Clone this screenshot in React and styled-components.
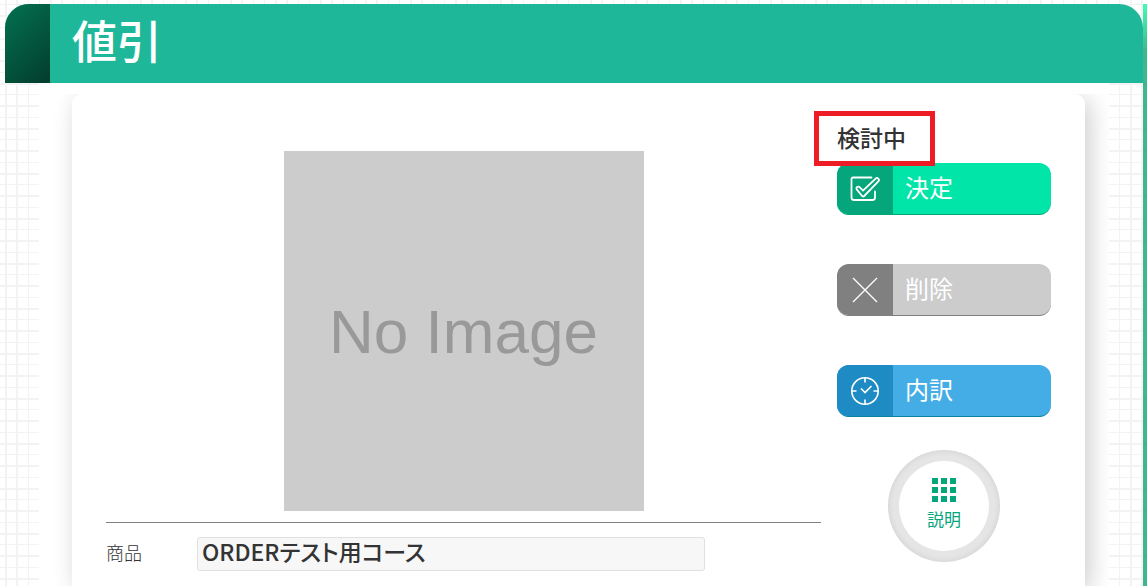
import React from "react";
import styled, { createGlobalStyle } from "styled-components";

const App = () => {
  return (
    <Page>
      <GlobalStyle />
      <Main>
        <Header>
          <HeaderMark />
          <h1>値引</h1>
        </Header>
        <Content>
          <CardArea>
            <Card>
              <Detail>
                <NoImage>No Image</NoImage>
                <Row>
                  <label htmlFor="product">商品</label>
                  <input
                    id="product"
                    type="text"
                    defaultValue="ORDERテスト用コース"
                  />
                </Row>
              </Detail>
              <Side>
                <Status>検討中</Status>
                <Actions>
                  <ActionButton $main="#02e5a9" $dark="#06a67c">
                    <ActionIcon $color="#06a67c">
                      <CheckIcon />
                    </ActionIcon>
                    <span>決定</span>
                  </ActionButton>
                  <ActionButton $main="#cccccc" $dark="#808080">
                    <ActionIcon $color="#808080">
                      <CrossIcon />
                    </ActionIcon>
                    <span>削除</span>
                  </ActionButton>
                  <ActionButton $main="#45ade5" $dark="#07839a">
                    <ActionIcon $color="#1f8bc4">
                      <ClockIcon />
                    </ActionIcon>
                    <span>内訳</span>
                  </ActionButton>
                </Actions>
                <HelpButton>
                  <HelpInner>
                    <GridIcon />
                    <span>説明</span>
                  </HelpInner>
                </HelpButton>
              </Side>
            </Card>
          </CardArea>
        </Content>
      </Main>
      <SideEdge />
    </Page>
  );
};

const CheckIcon = () => (
  <svg width="30" height="26" viewBox="0 0 30 26" fill="none" stroke="#fff">
    <path
      strokeWidth="1.8"
      strokeLinecap="round"
      d="M21.5 1.5H3A1.5 1.5 0 0 0 1.5 3v18.5A2.5 2.5 0 0 0 4 24h18.5a2.5 2.5 0 0 0 2.5-2.5v-6"
    />
    <path
      strokeWidth="1.8"
      strokeLinejoin="round"
      d="M6.9 13.6a1.8 1.8 0 0 1 2.6-2.5l3.5 3.5L25.6 2.7a1.9 1.9 0 0 1 2.7 2.7L14.2 20a1.5 1.5 0 0 1-2.1 0z"
    />
  </svg>
);

const CrossIcon = () => (
  <svg width="26" height="26" viewBox="0 0 26 26" fill="none" stroke="#fff">
    <path strokeWidth="1.3" d="M1 1l24 24M25 1l-24 24" />
  </svg>
);

const ClockIcon = () => (
  <svg width="28" height="28" viewBox="0 0 28 28" fill="none" stroke="#fff">
    <circle cx="14" cy="14" r="13.2" strokeWidth="1.6" />
    <path
      strokeWidth="1.6"
      d="M14 1v4.5M14 22.5v4.5M1 14h4.5M22.5 14h4.5M10 11.5l4 4 6.5-6.5"
    />
  </svg>
);

const GridIcon = () => (
  <svg width="24" height="24" viewBox="0 0 24 24" fill="#06a67c">
    {[0, 9, 18].map((y) =>
      [0, 9, 18].map((x) => (
        <rect key={`${x}-${y}`} x={x} y={y} width="6" height="6" />
      ))
    )}
  </svg>
);

export default App;

const GlobalStyle = createGlobalStyle`
  * {
    box-sizing: border-box;
  }

  body {
    margin: 0;
    overflow: hidden;
    color: #333;
    font-family: "Noto Sans CJK JP", "Noto Sans", sans-serif;
    font-feature-settings: "palt";
  }

  button,
  input {
    font-family: inherit;
    font-feature-settings: inherit;
  }
`;

const line = "#f3f3f3";

const Page = styled.div`
  display: flex;
  min-height: 100vh;
  padding: 4px 0 0 5px;
  background-color: #fff;
  background-image:
    linear-gradient(
      90deg,
      transparent 5px, ${line} 5px, ${line} 7px,
      transparent 7px, transparent 16px, ${line} 16px, ${line} 18px,
      transparent 18px, transparent 28px, ${line} 28px, ${line} 29px,
      transparent 29px, transparent 39px, ${line} 39px, ${line} 40px,
      transparent 40px
    ),
    linear-gradient(
      transparent 4px, ${line} 4px, ${line} 5px,
      transparent 5px, transparent 15px, ${line} 15px, ${line} 17px,
      transparent 17px, transparent 27px, ${line} 27px, ${line} 28px,
      transparent 28px, transparent 38px, ${line} 38px, ${line} 40px,
      transparent 40px
    );
  background-size: 45px 45px;
`;
const Main = styled.div`
  flex: 1;
  display: flex;
  flex-direction: column;
`;
const SideEdge = styled.div`
  width: 4px;
  background: linear-gradient(
    rgba(20, 250, 160, 0.8),
    rgba(0, 160, 105, 0.75) 48px
  );
`;

const Header = styled.header`
  display: flex;
  height: 79px;
  overflow: hidden;
  border-radius: 24px 24px 0 0;
  background-color: #1fb79a;

  > h1 {
    margin: 0;
    padding-left: 22px;
    color: #fff;
    font-size: 45px;
    font-weight: 500;
    line-height: 72px;
  }
`;
const HeaderMark = styled.div`
  width: 45px;
  background: linear-gradient(135deg, #037250, #033c2c);
`;

const Content = styled.main`
  flex: 1;
  display: flex;
  margin: 0 34px;
  padding-top: 11px;
  background-color: #fff;
`;
const CardArea = styled.div`
  flex: 1;
  display: flex;
  padding: 0 24px 0 33px;
  overflow: hidden;
`;
const Card = styled.section`
  flex: 1;
  display: flex;
  gap: 16px;
  padding: 0 34px;
  border-radius: 10px 10px 0 0;
  background-color: #fff;
  box-shadow: 5px 5px 25px rgba(0, 0, 0, 0.2);
`;

const Detail = styled.div`
  flex: 1;
  padding-top: 57px;
`;
const NoImage = styled.div`
  display: flex;
  align-items: center;
  justify-content: center;
  width: 360px;
  height: 360px;
  margin: 0 auto 11px;
  background-color: #ccc;
  color: #999;
  font-family: "Liberation Sans", Arial, sans-serif;
  font-size: 62px;
`;
const Row = styled.div`
  display: flex;
  align-items: center;
  padding-top: 14px;
  border-top: 1px solid #808080;

  > label {
    width: 91px;
    padding-bottom: 4px;
    font-size: 18px;
    font-weight: 300;
  }

  > input {
    width: 71%;
    height: 34px;
    padding: 0 4px 6px;
    border: 1px solid #e0e0e0;
    border-radius: 3px;
    background-color: #f7f7f7;
    color: #333;
    font-size: 23px;
    font-weight: 500;
  }
`;

const Side = styled.div`
  display: flex;
  flex-direction: column;
  align-items: center;
  width: 214px;
  padding-top: 17px;
`;
const Status = styled.div`
  position: relative;
  align-self: flex-start;
  height: 52px;
  font-size: 23px;
  font-weight: 500;
  line-height: 52px;

  &::after {
    content: "";
    position: absolute;
    z-index: 1;
    inset: 0 -29px -3px -23px;
    border: 5px solid #ee1c24;
  }
`;
const Actions = styled.div`
  display: flex;
  flex-direction: column;
  gap: 49px;
  width: 100%;
`;
const ActionButton = styled.button`
  display: flex;
  align-items: stretch;
  height: 52px;
  padding: 0;
  overflow: hidden;
  border: 0;
  border-bottom: 1px solid ${(props) => props.$dark};
  border-radius: 12px;
  background-color: ${(props) => props.$main};
  color: #fff;
  font-size: 24px;
  line-height: 48px;
  cursor: pointer;

  > span {
    padding-left: 12px;
  }
`;
const ActionIcon = styled.div`
  display: flex;
  align-items: center;
  justify-content: center;
  width: 56px;
  background-color: ${(props) => props.$color};
`;

const HelpButton = styled.button`
  width: 112px;
  height: 112px;
  margin-top: 33px;
  padding: 11px;
  border: 0;
  border-radius: 50%;
  background-color: #e5e5e5;
  box-shadow: inset 0 0 6px rgba(0, 0, 0, 0.1);
  cursor: pointer;
`;
const HelpInner = styled.span`
  display: flex;
  flex-direction: column;
  align-items: center;
  justify-content: center;
  gap: 5px;
  height: 100%;
  padding-bottom: 3px;
  border-radius: 50%;
  background-color: #fff;
  color: #06a67c;
  font-size: 17px;
  line-height: 24px;
`;
